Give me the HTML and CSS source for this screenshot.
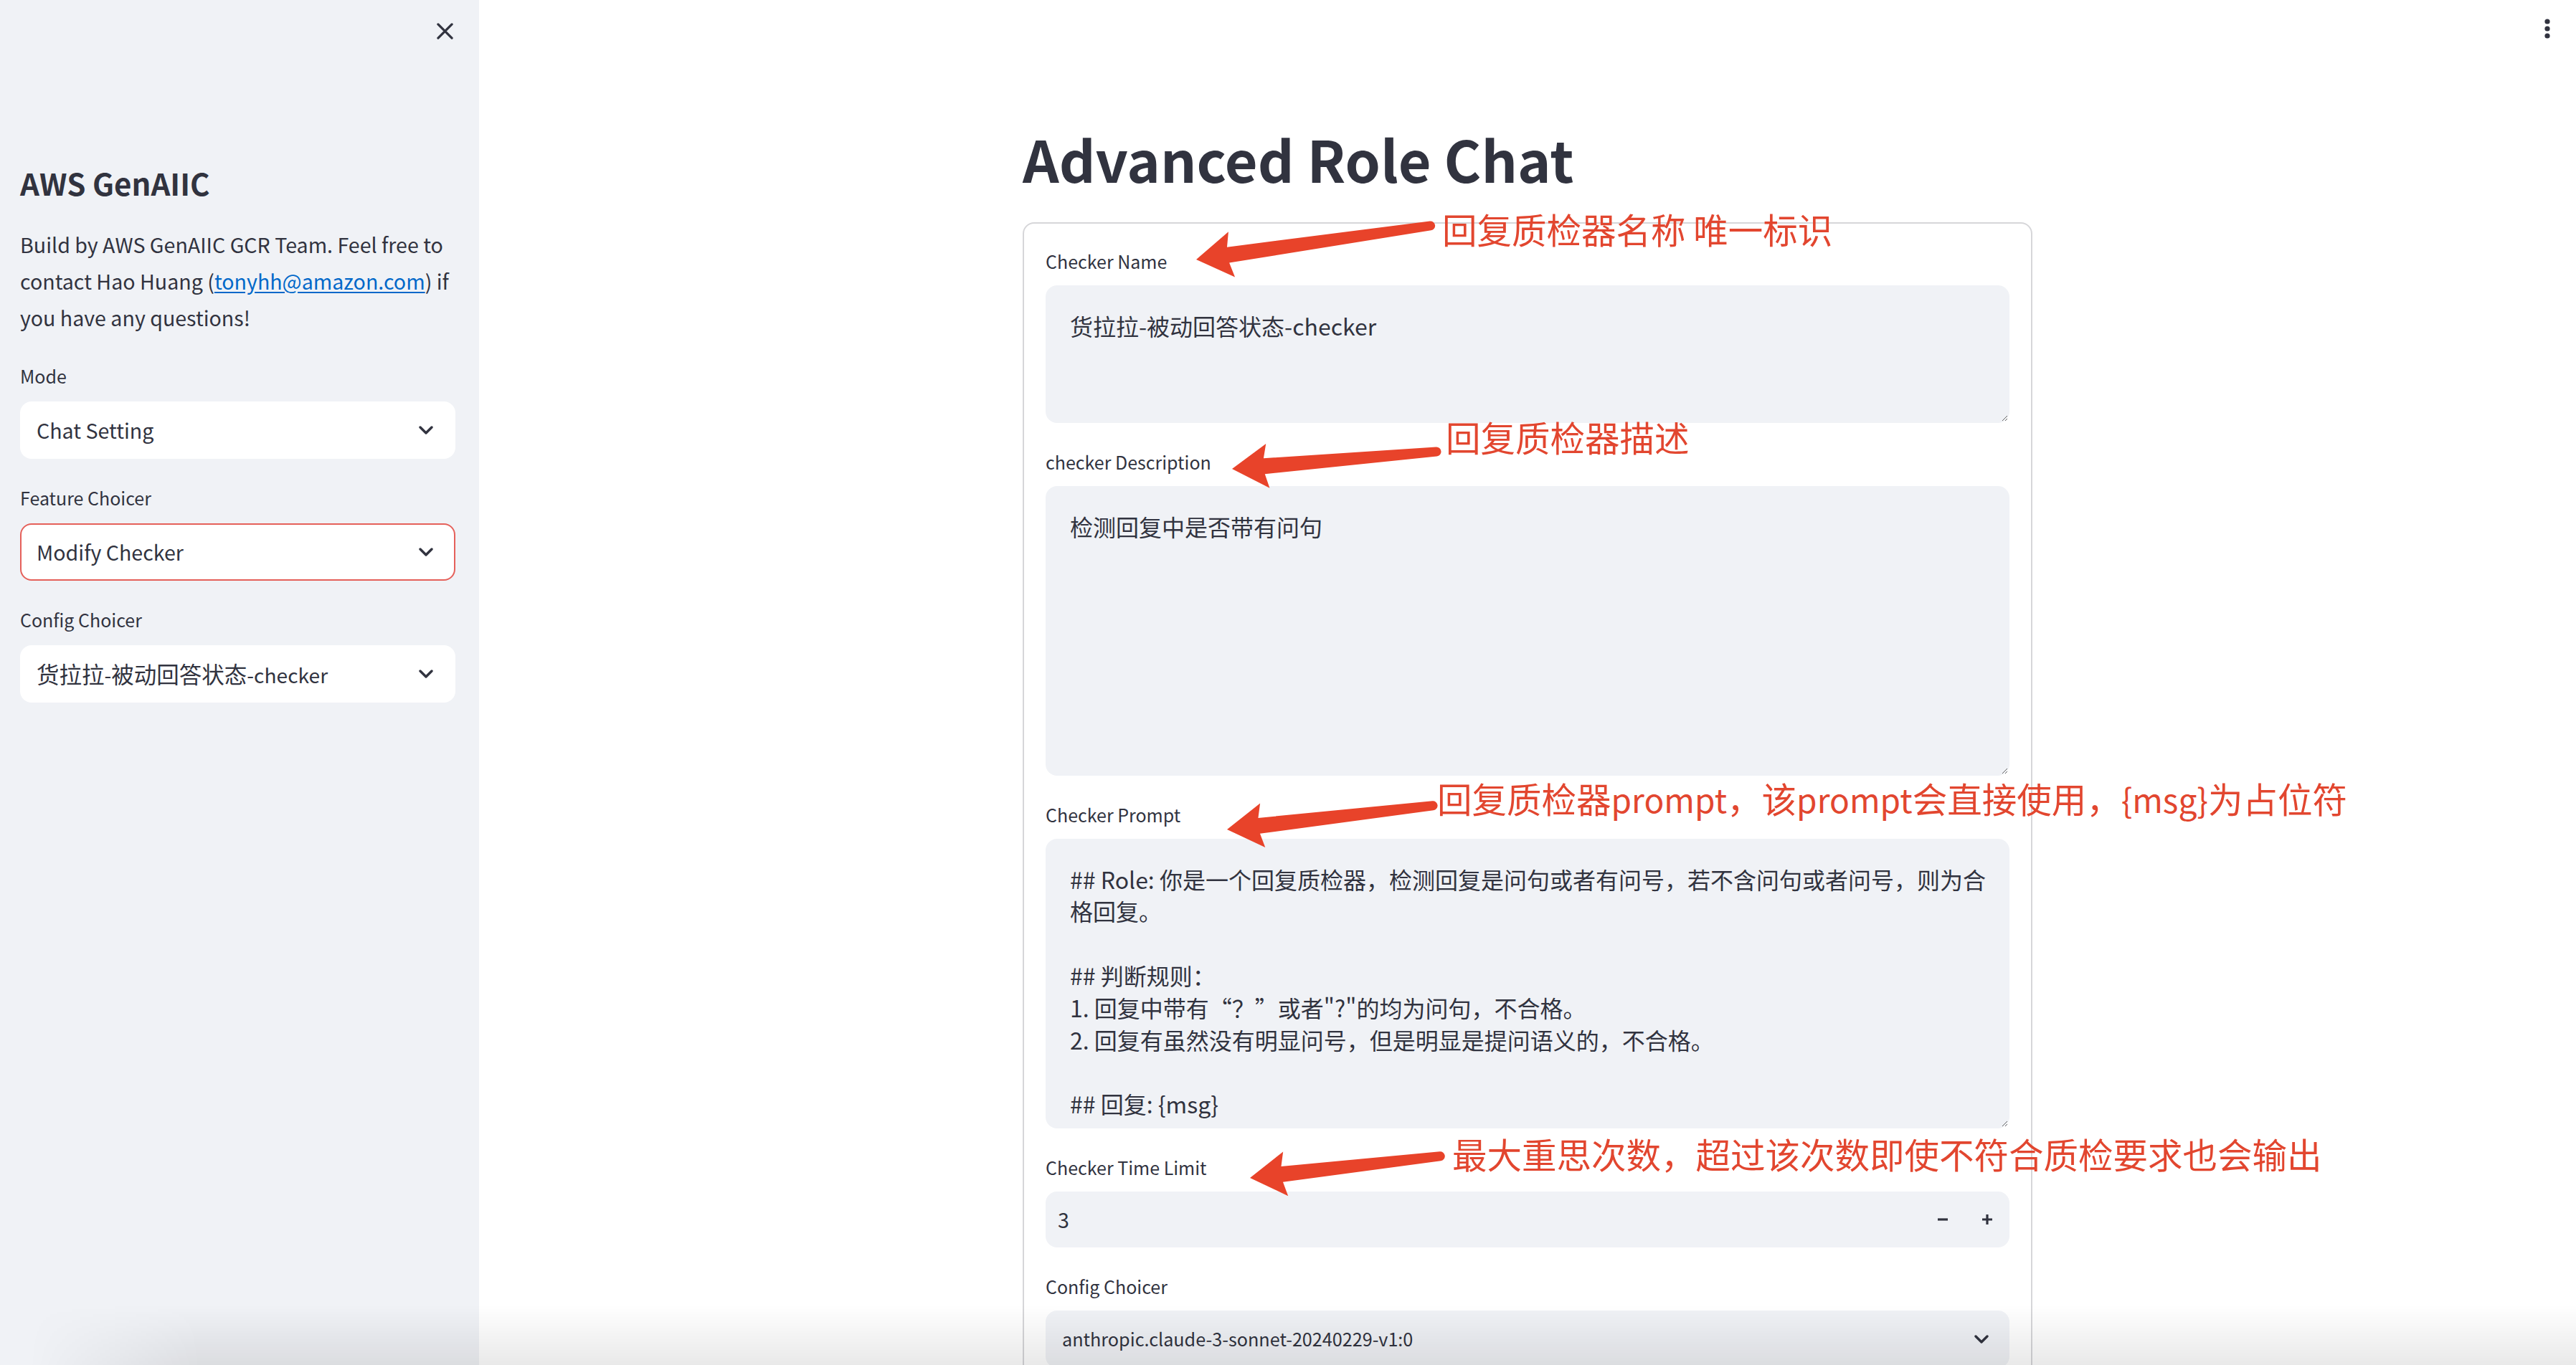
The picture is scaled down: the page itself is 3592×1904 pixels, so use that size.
FILE: index.html
```html
<!DOCTYPE html>
<html lang="zh-CN">
<head>
<meta charset="utf-8">
<title>Advanced Role Chat</title>
<link rel="stylesheet" href="styles.css">
</head>
<body>
<aside class="sidebar">
  <div class="sb-top">
    <svg class="close-btn" viewBox="0 0 24 24" aria-label="close"><path d="M2 2 L22 22 M22 2 L2 22" stroke="#31333f" stroke-width="3.4" stroke-linecap="round" fill="none"/></svg>
  </div>
  <h2 class="sb-title">AWS GenAIIC</h2>
  <p class="sb-text">Build by AWS GenAIIC GCR Team. Feel free to contact Hao Huang (<a class="link" href="#">tonyhh@amazon.com</a>) if you have any questions!</p>
  <div class="field sb-field first">
    <div class="label">Mode</div>
    <div class="select"><span>Chat Setting</span><svg class="chev" viewBox="0 0 20 12"><polyline points="2,2 10,10 18,2" fill="none" stroke="#31333f" stroke-width="3.4" stroke-linecap="round" stroke-linejoin="round"/></svg></div>
  </div>
  <div class="field sb-field">
    <div class="label">Feature Choicer</div>
    <div class="select focused"><span>Modify Checker</span><svg class="chev" viewBox="0 0 20 12"><polyline points="2,2 10,10 18,2" fill="none" stroke="#31333f" stroke-width="3.4" stroke-linecap="round" stroke-linejoin="round"/></svg></div>
  </div>
  <div class="field sb-field">
    <div class="label">Config Choicer</div>
    <div class="select mixed"><span>货拉拉<span class="lat">-</span>被动回答状态<span class="lat">-checker</span></span><svg class="chev" viewBox="0 0 20 12"><polyline points="2,2 10,10 18,2" fill="none" stroke="#31333f" stroke-width="3.4" stroke-linecap="round" stroke-linejoin="round"/></svg></div>
  </div>
</aside>

<main class="main">
  <div class="block">
    <h1 class="title">Advanced Role Chat</h1>
    <div class="card">
      <div class="field">
        <div class="label">Checker Name</div>
        <textarea class="area area-short">货拉拉-被动回答状态-checker</textarea>
      </div>
      <div class="field">
        <div class="label">checker Description</div>
        <textarea class="area area-tall">检测回复中是否带有问句</textarea>
      </div>
      <div class="field">
        <div class="label">Checker Prompt</div>
        <textarea class="area area-tall">## Role: 你是一个回复质检器，检测回复是问句或者有问号，若不含问句或者问号，则为合格回复。

## 判断规则：
1. 回复中带有“？”或者"?"的均为问句，不合格。
2. 回复有虽然没有明显问号，但是明显是提问语义的，不合格。

## 回复: {msg}</textarea>
      </div>
      <div class="field">
        <div class="label">Checker Time Limit</div>
        <div class="number">
          <span class="num-value">3</span>
          <span class="step"><svg viewBox="0 0 16 16"><path d="M1 8 H15" stroke="#31333f" stroke-width="3.2" fill="none"/></svg></span>
          <span class="step"><svg viewBox="0 0 16 16"><path d="M1 8 H15 M8 1 V15" stroke="#31333f" stroke-width="3.2" fill="none"/></svg></span>
        </div>
      </div>
      <div class="field">
        <div class="label">Config Choicer</div>
        <div class="select main-select"><span>anthropic.claude-3-sonnet-20240229-v1:0</span><svg class="chev" viewBox="0 0 20 12"><polyline points="2,2 10,10 18,2" fill="none" stroke="#31333f" stroke-width="3.4" stroke-linecap="round" stroke-linejoin="round"/></svg></div>
      </div>
    </div>
  </div>
</main>

<div class="menu-dots"><svg viewBox="0 0 8 28"><circle cx="4" cy="4" r="3.6" fill="#31333f"/><circle cx="4" cy="14" r="3.6" fill="#31333f"/><circle cx="4" cy="24" r="3.6" fill="#31333f"/></svg></div>

<div class="annotations">
  <svg class="arrows" viewBox="0 0 3592 1904">
    <g fill="#e8432a">
      <path transform="translate(1668 362) rotate(-8.2)" d="M0 0 L50 -32 L45 -11 L330 -6.5 A6.5 6.5 0 0 1 330 6.5 L45 11 L50 32 Z"/>
      <path transform="translate(1718 654) rotate(-4.8)" d="M0 0 L50 -31 L45 -11 L286 -6.5 A6.5 6.5 0 0 1 286 6.5 L45 11 L50 31 Z"/>
      <path transform="translate(1711 1157) rotate(-6.6)" d="M0 0 L50 -31 L45 -11 L289 -6.5 A6.5 6.5 0 0 1 289 6.5 L45 11 L50 31 Z"/>
      <path transform="translate(1743 1643) rotate(-6.5)" d="M0 0 L50 -31 L45 -11 L267 -6.5 A6.5 6.5 0 0 1 267 6.5 L45 11 L50 31 Z"/>
    </g>
  </svg>
  <span class="anno anno-1">回复质检器名称 唯一标识</span>
  <span class="anno anno-2">回复质检器描述</span>
  <span class="anno anno-3">回复质检器<span class="anno-lat">prompt</span>，该<span class="anno-lat">prompt</span>会直接使用，<span class="anno-lat">{msg}</span>为占位符</span>
  <span class="anno anno-4">最大重思次数，超过该次数即使不符合质检要求也会输出</span>
</div>

<div class="bottom-shade"></div>
</body>
</html>
```

FILE: styles.css
```css
* { box-sizing: border-box; }

html, body {
  margin: 0;
  padding: 0;
}

body {
  position: relative;
  display: flex;
  width: 3592px;
  height: 1904px;
  overflow: hidden;
  background: #ffffff;
  color: #31333f;
  font-family: "Noto Sans CJK SC", "Noto Sans", sans-serif;
}

/* ---------- sidebar ---------- */
.sidebar {
  flex: none;
  width: 668px;
  height: 100%;
  background: #f0f2f6;
  padding: 0 33px 0 28px;
}

.sb-top {
  height: 86px;
  display: flex;
  justify-content: flex-end;
  align-items: center;
}

.close-btn {
  width: 23px;
  height: 23px;
  margin-right: 3px;
}

.sb-title {
  margin: 140px 0 0;
  font-size: 42px;
  font-weight: 700;
  line-height: 57.6px;
}

.sb-text {
  margin: 31px -6px 0 0;
  font-size: 28.6px;
  line-height: 51.2px;
}

.link {
  color: #0068c9;
  text-decoration: underline;
  text-underline-offset: 3px;
}

.field {
  margin-top: 32px;
}

.card .field:first-child {
  margin-top: 0;
}

.sb-field.first {
  margin-top: 34px;
}

.label {
  height: 48px;
  margin-bottom: 8px;
  font-size: 25px;
  line-height: 44.8px;
  white-space: nowrap;
}

.sb-field .label {
  margin-bottom: 10px;
}

.select {
  height: 80px;
  display: flex;
  align-items: center;
  justify-content: space-between;
  padding: 0 29px 0 21px;
  border: 2px solid transparent;
  border-radius: 16px;
  background: #ffffff;
  font-size: 28.6px;
  line-height: 44.8px;
  white-space: nowrap;
}

.select.mixed {
  font-size: 31.5px;
}

.lat {
  font-size: 0.895em;
}

.select.focused {
  border-color: #e5605a;
}

.chev {
  flex: none;
  width: 20px;
  height: 12px;
}

/* ---------- main ---------- */
.main {
  flex: 1;
  height: 100%;
  padding-top: 168px;
}

.block {
  width: 1408px;
  margin: 0 auto;
}

.title {
  margin: 0 0 36px;
  font-size: 79px;
  font-weight: 700;
  line-height: 105.6px;
}

.card {
  border: 2px solid #d6d6d9;
  border-radius: 16px;
  padding: 30px;
}

.area {
  display: block;
  width: 100%;
  margin: 0;
  padding: 32px 26px 32px 32px;
  border: 2px solid transparent;
  border-radius: 16px;
  background: #f0f2f6;
  color: #31333f;
  font-family: "Noto Sans CJK SC", "Noto Sans", sans-serif;
  font-size: 32px;
  line-height: 1.4;
  resize: vertical;
  outline: none;
  overflow: hidden;
}

.area-short { height: 192px; }
.area-tall { height: 404px; }

.number {
  height: 78px;
  display: flex;
  align-items: center;
  padding: 0 0 0 17px;
  border-radius: 16px;
  background: #f0f2f6;
  font-size: 28.6px;
}

.num-value {
  flex: 1;
}

.step {
  width: 62px;
  height: 100%;
  display: flex;
  align-items: center;
  justify-content: center;
}

.step svg {
  width: 16px;
  height: 16px;
}

.main-select {
  background: #f0f2f6;
  padding: 0 27px 0 21px;
  font-size: 25.2px;
}

/* ---------- overlays ---------- */
.menu-dots {
  position: absolute;
  top: 26px;
  right: 36px;
  width: 8px;
  height: 28px;
}

.menu-dots svg {
  display: block;
  width: 8px;
  height: 28px;
}

.annotations {
  position: absolute;
  left: 0;
  top: 0;
  width: 3592px;
  height: 1904px;
  pointer-events: none;
}

.arrows {
  position: absolute;
  left: 0;
  top: 0;
  width: 3592px;
  height: 1904px;
}

.anno {
  position: absolute;
  font-family: "Noto Sans CJK SC", sans-serif;
  font-size: 48.5px;
  line-height: 48px;
  color: #e2462f;
  white-space: nowrap;
}

.anno-lat {
  font-size: 0.95em;
}

.anno-1 { left: 2011px; top: 295px; }
.anno-2 { left: 2016px; top: 585px; }
.anno-3 { left: 2004px; top: 1089px; }
.anno-4 { left: 2025px; top: 1585px; }

.bottom-shade {
  position: fixed;
  left: 0;
  right: 0;
  bottom: 0;
  height: 84px;
  background: linear-gradient(to bottom, rgba(0, 0, 0, 0), rgba(0, 0, 0, 0.085));
  -webkit-mask-image: linear-gradient(to right, transparent 40px, #000 280px);
  mask-image: linear-gradient(to right, transparent 40px, #000 280px);
  pointer-events: none;
}
```
